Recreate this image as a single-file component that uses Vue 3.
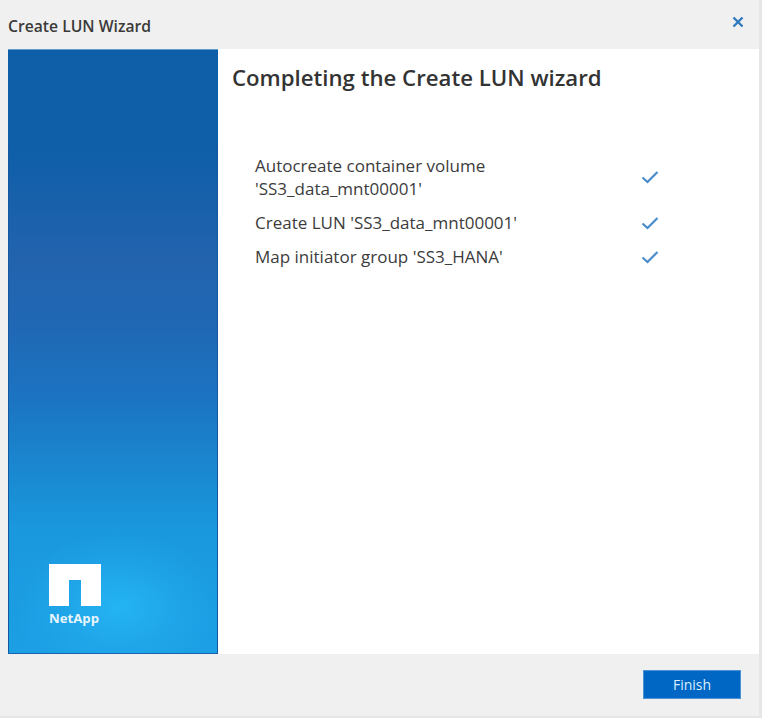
<script setup>
const tasks = [
  { id: 1, text: "Autocreate container volume\n'SS3_data_mnt00001'" },
  { id: 2, text: "Create LUN 'SS3_data_mnt00001'" },
  { id: 3, text: "Map initiator group 'SS3_HANA'" },
]
</script>

<template>
  <div class="page">
    <div class="dialog">
      <header class="titlebar">
        <span class="title">Create LUN Wizard</span>
        <svg class="close" width="12" height="12" viewBox="0 0 12 12" aria-label="Close">
          <path d="M1.5 1.5 10.5 10.5M10.5 1.5 1.5 10.5" fill="none" stroke="#2f79bd" stroke-width="2.4" />
        </svg>
      </header>
      <div class="body">
        <aside class="banner">
          <div class="band"></div>
          <div class="brand">
            <svg class="logo" width="52" height="42" viewBox="0 0 52 42" aria-label="NetApp logo">
              <path d="M0 0H52V42H32V16H20V42H0Z" fill="#fff" />
            </svg>
            <span class="brand-name">NetApp</span>
          </div>
        </aside>
        <main class="content">
          <h1>Completing the Create LUN wizard</h1>
          <ul class="tasks">
            <li v-for="task in tasks" :key="task.id">
              <span class="task-text">{{ task.text }}</span>
              <svg class="check" width="18" height="14" viewBox="0 0 18 14">
                <path d="M1.5 7.5 6.5 12 16.5 2" fill="none" stroke="#4a8cc9" stroke-width="2.2" />
              </svg>
            </li>
          </ul>
        </main>
      </div>
      <footer class="footer">
        <button class="finish" type="button">Finish</button>
      </footer>
    </div>
  </div>
</template>

<style>
html, body { margin: 0; background: #fff; }
</style>

<style scoped>
.page {
  width: 762px;
  height: 718px;
  overflow: hidden;
  font-family: "Open Sans", "Liberation Sans", sans-serif;
  background: #e6e6e6;
  box-sizing: border-box;
  padding: 0 3px 2px 0;
}
.dialog {
  height: 716px;
  display: flex;
  flex-direction: column;
  background: #f0f0f0;
}
.titlebar {
  height: 49px;
  flex: none;
  display: flex;
  align-items: center;
  justify-content: space-between;
  padding: 2px 15px 0 8px;
  box-sizing: border-box;
}
.title {
  font-size: 15.7px;
  font-weight: 600;
  color: #3a3a3a;
}
.close { position: relative; top: -4px; }
.body {
  height: 605px;
  flex: none;
  display: flex;
  padding-left: 8px;
}
.banner {
  width: 210px;
  flex: none;
  box-sizing: border-box;
  display: flex;
  flex-direction: column;
  justify-content: flex-end;
  position: relative;
  border-top: 1px solid #5f9ccf;
  border-bottom: 1px solid #1565ad;
  background: #0e5ea8;
}
.band {
  position: absolute;
  left: 0;
  right: 0;
  top: 95px;
  bottom: 0;
  border-left: 1px solid #14599f;
  border-right: 1px solid #14599f;
  background:
    radial-gradient(ellipse 105px 75px at 53% 91%, rgba(36, 180, 243, 1) 0%, rgba(34, 172, 238, 0.5) 55%, rgba(30, 160, 232, 0) 100%),
    linear-gradient(180deg, #0e5ea8 0%, #2363ae 23%, #2068b5 36%, #1b74c2 50%, #1a88d0 64%, #1a98de 76%, #1c9fe4 100%);
}
.brand {
  position: relative;
  display: flex;
  flex-direction: column;
  align-items: flex-start;
  padding: 0 0 27px 41px;
}
.logo { display: block; }
.brand-name {
  margin-top: 4px;
  font-size: 13.2px;
  line-height: 16px;
  font-weight: 700;
  color: #e6f5fd;
}
.content {
  flex: 1;
  background: #fff;
  padding: 14px 0 0 14px;
}
h1 {
  margin: 0;
  font-size: 22.2px;
  line-height: 30px;
  font-weight: 600;
  color: #333;
}
.tasks {
  list-style: none;
  margin: 61px 0 0;
  padding: 0 0 0 23px;
  display: flex;
  flex-direction: column;
  gap: 11px;
}
.tasks li {
  width: 404px;
  display: flex;
  align-items: center;
  justify-content: space-between;
}
.task-text {
  font-size: 17px;
  line-height: 23px;
  color: #3c3c3c;
  white-space: pre-line;
}
.footer {
  flex: 1;
  display: flex;
  align-items: flex-start;
  justify-content: flex-end;
  padding: 16px 18px 0 0;
}
.finish {
  width: 98px;
  height: 29px;
  border: 1px solid #4c93d6;
  background: #0067c5;
  color: #dceefc;
  font: 400 14px "Open Sans", sans-serif;
  padding: 0;
}
</style>
